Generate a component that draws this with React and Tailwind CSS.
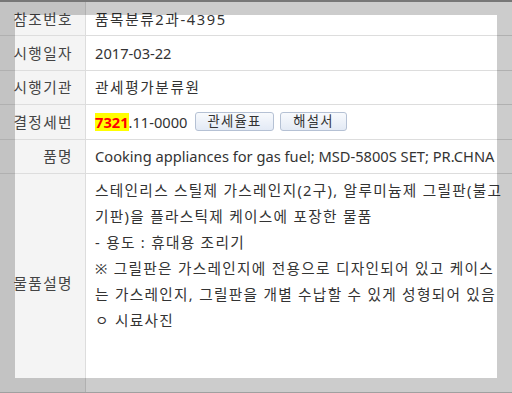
const rows = [
  { label: '참조번호', value: '품목분류2과-4395', ko: true },
  { label: '시행일자', value: '2017-03-22' },
  { label: '시행기관', value: '관세평가분류원', ko: true },
];

const descLines = [
  '스테인리스 스틸제 가스레인지(2구), 알루미늄제 그릴판(불고',
  '기판)을 플라스틱제 케이스에 포장한 물품',
  '- 용도 : 휴대용 조리기',
  '※ 그릴판은 가스레인지에 전용으로 디자인되어 있고 케이스',
  '는 가스레인지, 그릴판을 개별 수납할 수 있게 성형되어 있음',
  'ㅇ 시료사진',
];

function Label({ children }) {
  return (
    <div className="w-[86px] shrink-0 bg-[#f4f4f4] border-r border-[#dddddd] flex items-center justify-end pr-[12px] text-[#444] tracking-[1.4px]">
      {children}
    </div>
  );
}

function Row({ label, children, first }) {
  return (
    <div className={`flex border-b border-[#dddddd] ${first ? 'h-[34px]' : 'h-[34.5px]'}`}>
      <Label>{label}</Label>
      <div className="flex-1 flex items-center pl-[9px] whitespace-nowrap overflow-hidden">{children}</div>
    </div>
  );
}

function SmallButton({ children }) {
  return (
    <button className="h-[19px] px-[12px] border border-[#b5c1d4] rounded-[3px] bg-gradient-to-b from-[#f8fafd] to-[#e3eaf5] text-[13.33px] leading-none text-[#333] tracking-[1.2px]">
      {children}
    </button>
  );
}

export default function App() {
  return (
    <div className="relative w-[512px] h-[393px] overflow-hidden bg-white text-[14.67px] text-[#333] font-['Noto_Sans','Noto_Sans_CJK_KR',sans-serif]">
      <div className="border-t-2 border-[#959595]">
        {rows.map((r, i) => (
          <Row key={r.label} label={r.label} first={i === 0}>
            <span className={r.ko ? 'tracking-[1.6px]' : ''}>{r.value}</span>
          </Row>
        ))}
        <Row label="결정세번">
          <span className="bg-[#ffff00] text-[#ff0000] font-bold leading-[18px]">7321</span>
          <span>.11-0000</span>
          <div className="flex gap-[6px] ml-[7px]">
            <SmallButton>관세율표</SmallButton>
            <SmallButton>해설서</SmallButton>
          </div>
        </Row>
        <Row label="품명">Cooking appliances for gas fuel; MSD-5800S SET; PR.CHNA</Row>
        <div className="flex h-[219px] border-b border-[#c8c8c8]">
          <Label>물품설명</Label>
          <div className="flex-1 pl-[9px] pt-[3px] leading-[26px] whitespace-nowrap overflow-hidden tracking-[1.3px]">
            {descLines.map((l) => (
              <div key={l}>{l}</div>
            ))}
          </div>
        </div>
      </div>
      <div className="absolute inset-0 border-[15px] border-black/20 pointer-events-none" />
    </div>
  );
}
